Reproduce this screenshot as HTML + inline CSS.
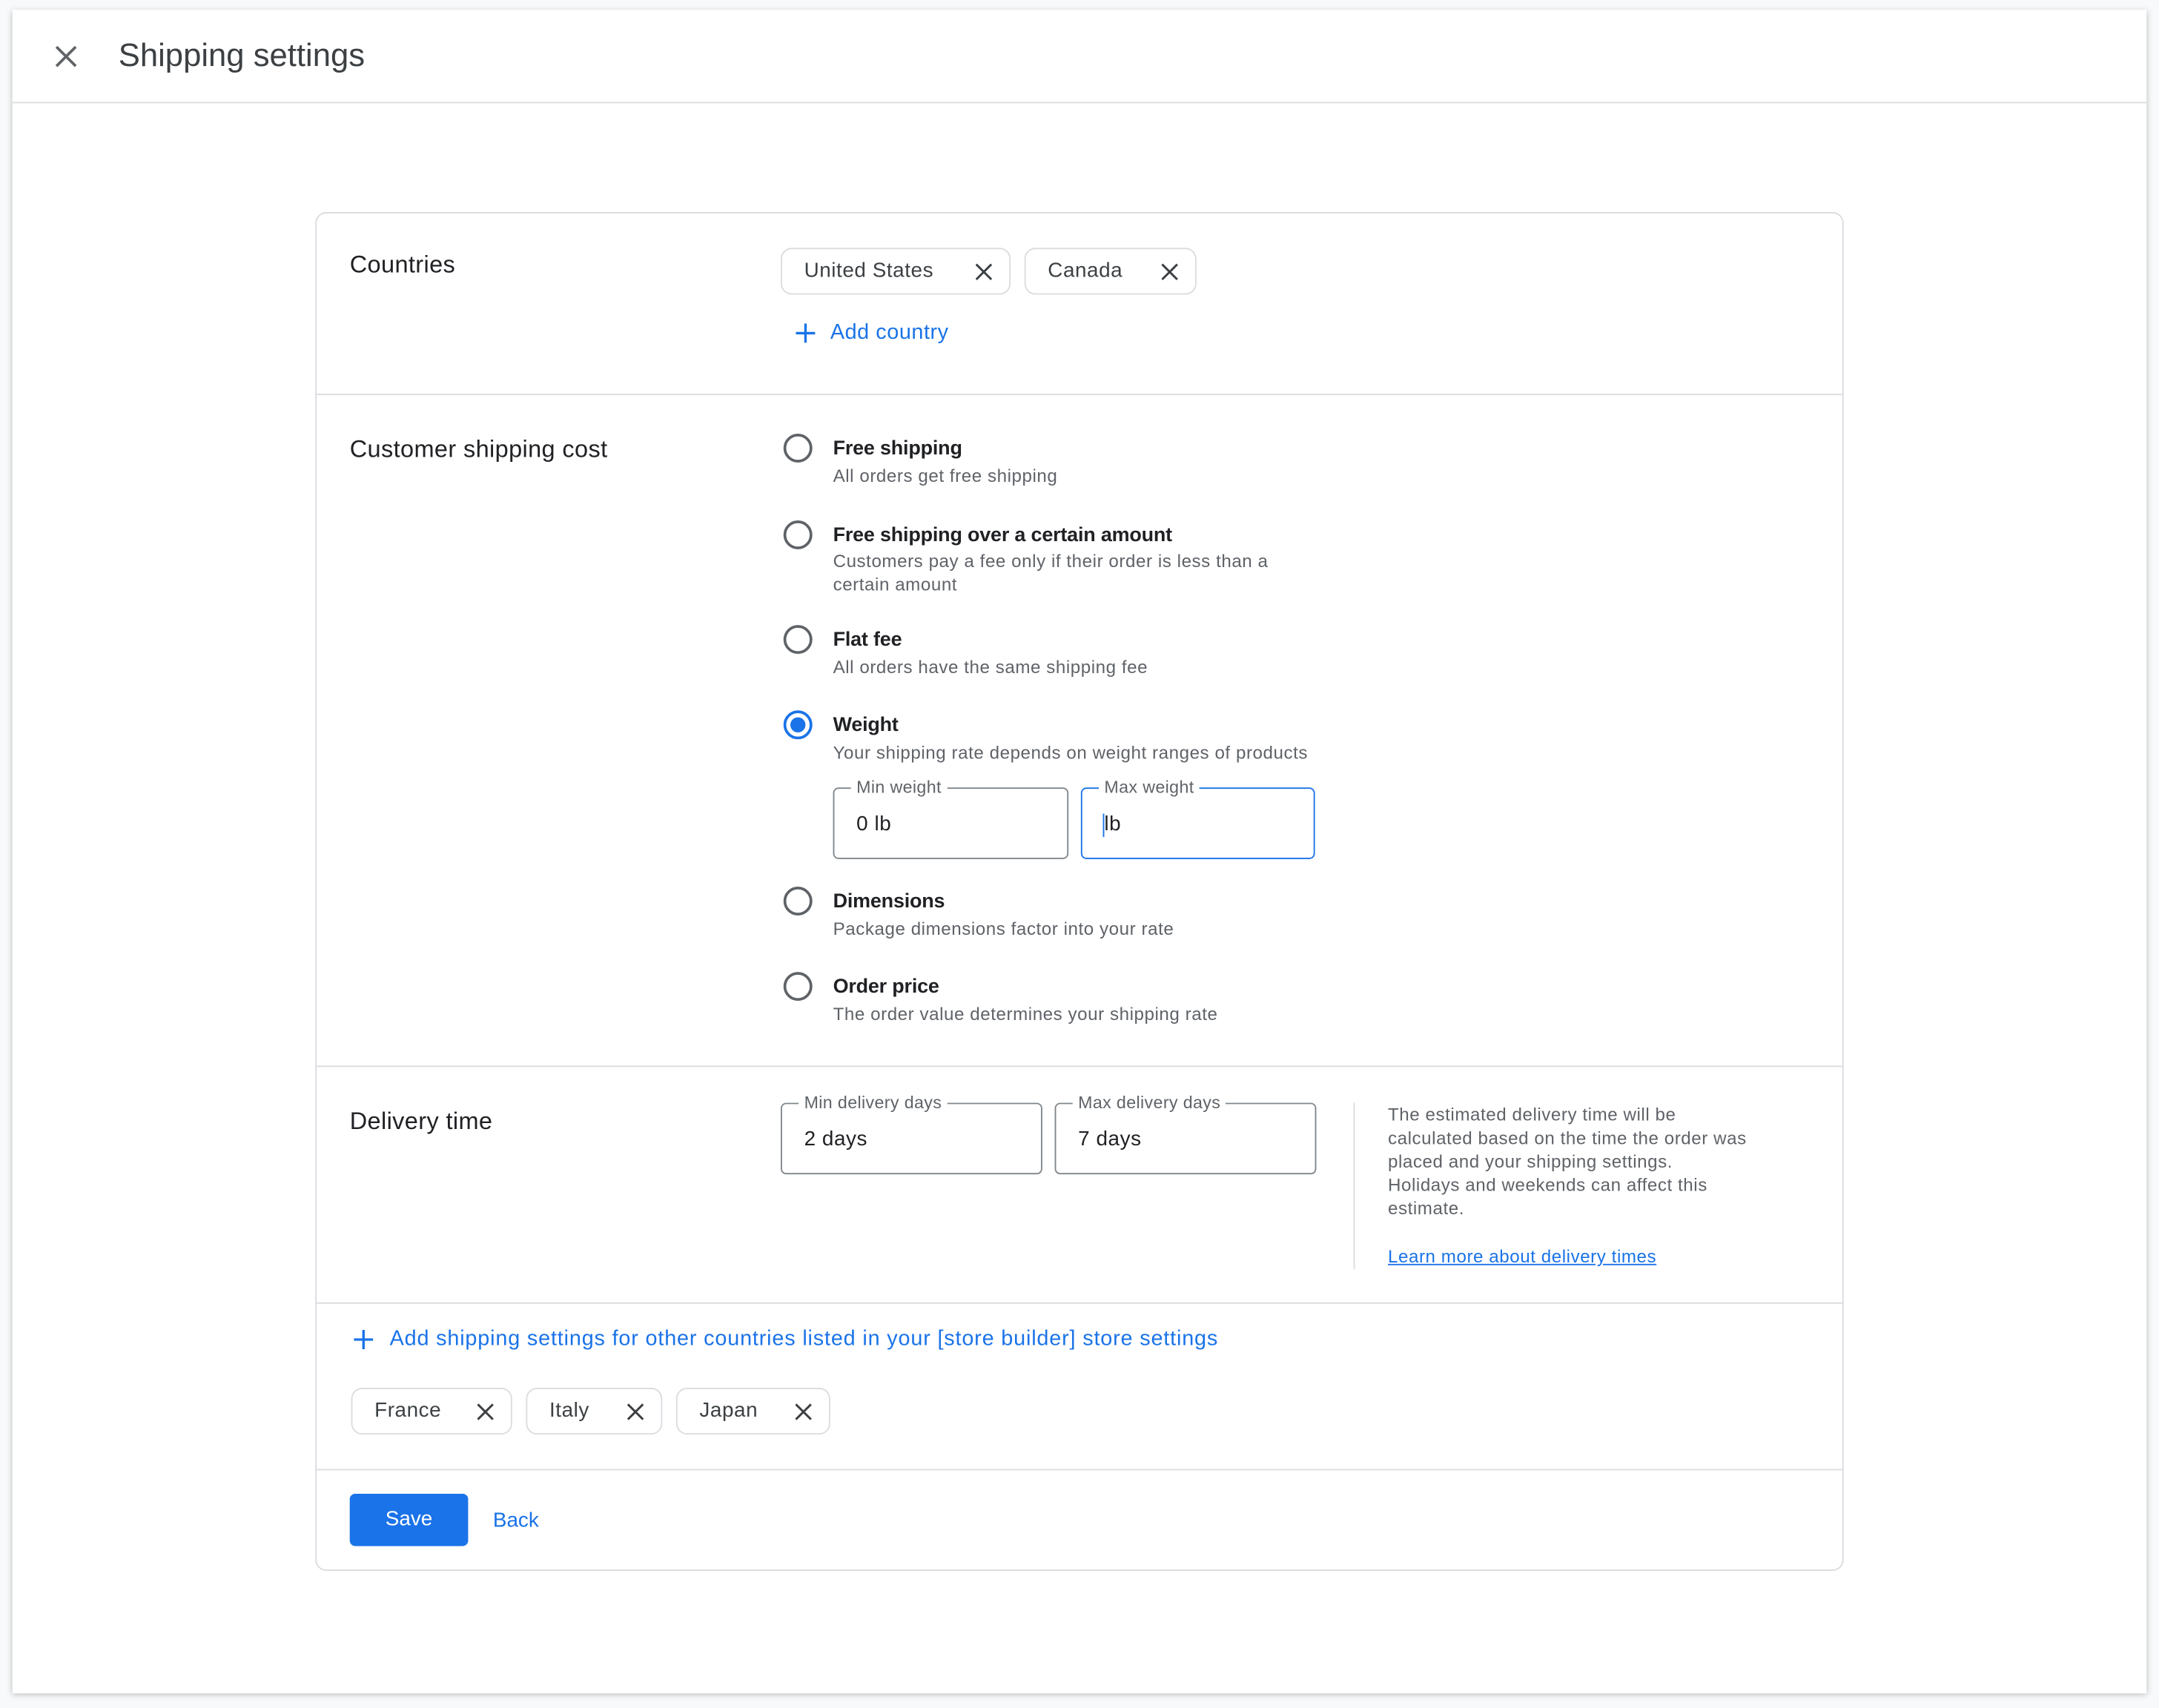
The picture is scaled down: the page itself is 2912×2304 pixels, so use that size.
<!DOCTYPE html>
<html><head><style>
*{box-sizing:border-box;margin:0;padding:0}
html,body{width:2912px;height:2304px;overflow:hidden;background:#f8f9fa}
#w{width:1568px;height:1241px;transform:scale(1.857143);transform-origin:0 0;position:relative;font-family:"Liberation Sans",Arial,sans-serif;color:#202124}
.panel{position:absolute;left:9px;top:7px;width:1550px;height:1223px;background:#fff;box-shadow:0 1px 4px rgba(0,0,0,.25)}
.a{position:absolute}
.hd{position:absolute;left:0;top:67px;width:1550px;height:1px;background:#dadce0}
.card{position:absolute;left:229px;top:154px;width:1110px;height:987px;border:1px solid #dadce0;border-radius:8px}
.div{position:absolute;left:0;width:1108px;height:1px;background:#dadce0}
.lbl{position:absolute;left:24px;font-size:17.5px;color:#202124;letter-spacing:.2px}
.chip{position:absolute;height:34px;border:1px solid #dadce0;border-radius:8px;font-size:15px;color:#3c4043;padding-left:16px;line-height:32px;letter-spacing:.3px}
.chip svg{position:absolute;right:12px;top:10px}
.radio{position:absolute;width:21px;height:21px;border:2px solid #5f6368;border-radius:50%}
.rt{position:absolute;font-size:14.5px;font-weight:bold;color:#202124;letter-spacing:-.1px}
.rd{position:absolute;font-size:13px;color:#5f6368;line-height:17px;letter-spacing:.3px}
.inp{position:absolute;height:52px;border:1px solid #80868b;border-radius:4px;font-size:15px;color:#202124;padding:17px 0 0 16px;letter-spacing:.3px}
.inp span{position:absolute;top:-8px;left:12px;background:#fff;padding:0 4px;font-size:12.5px;color:#5f6368;line-height:14px;letter-spacing:.2px}
.blue{color:#1a73e8}
</style></head><body><div id="w">
<div class="panel">
<svg class="a" style="left:31px;top:26px" width="16" height="16" viewBox="0 0 16 16"><path d="M1 1L15 15M15 1L1 15" stroke="#5f6368" stroke-width="2"/></svg>
<div class="a" style="left:77px;top:20px;font-size:23.5px;color:#3c4043">Shipping settings</div>
<div class="hd"></div>
</div>
<div class="card">
<div class="lbl" style="top:27px">Countries</div>
<div class="chip" style="left:337px;top:25px;width:167px">United States<svg width="13" height="13" viewBox="0 0 13 13"><path d="M1 1L12 12M12 1L1 12" stroke="#3c4043" stroke-width="1.6"/></svg></div>
<div class="chip" style="left:514px;top:25px;width:125px">Canada<svg width="13" height="13" viewBox="0 0 13 13"><path d="M1 1L12 12M12 1L1 12" stroke="#3c4043" stroke-width="1.6"/></svg></div>
<svg class="a" style="left:348px;top:80px" width="14" height="14" viewBox="0 0 14 14"><path d="M7 0V14M0 7H14" stroke="#1a73e8" stroke-width="1.8"/></svg>
<div class="a blue" style="left:373px;top:78px;font-size:15.5px;letter-spacing:.3px">Add country</div>
<div class="div" style="top:131px"></div>
<div class="lbl" style="top:161px">Customer shipping cost</div>
<div class="radio" style="left:339px;top:160px"></div>
<div class="rt" style="left:375px;top:163px">Free shipping</div>
<div class="rd" style="left:375px;top:182px">All orders get free shipping</div>
<div class="radio" style="left:339px;top:223px"></div>
<div class="rt" style="left:375px;top:226px">Free shipping over a certain amount</div>
<div class="rd" style="left:375px;top:244px">Customers pay a fee only if their order is less than a<br>certain amount</div>
<div class="radio" style="left:339px;top:299px"></div>
<div class="rt" style="left:375px;top:302px">Flat fee</div>
<div class="rd" style="left:375px;top:321px">All orders have the same shipping fee</div>
<div class="radio" style="left:339px;top:361px;border-color:#1a73e8"><div style="position:absolute;left:3px;top:3px;width:11px;height:11px;border-radius:50%;background:#1a73e8"></div></div>
<div class="rt" style="left:375px;top:364px">Weight</div>
<div class="rd" style="left:375px;top:383px">Your shipping rate depends on weight ranges of products</div>
<div class="inp" style="left:375px;top:417px;width:171px"><span>Min weight</span>0 lb</div>
<div class="inp" style="left:555px;top:417px;width:170px;border-color:#1a73e8"><span>Max weight</span><b style="position:absolute;left:15px;top:18px;width:1px;height:17px;background:#1a73e8"></b>lb</div>
<div class="radio" style="left:339px;top:489px"></div>
<div class="rt" style="left:375px;top:492px">Dimensions</div>
<div class="rd" style="left:375px;top:511px">Package dimensions factor into your rate</div>
<div class="radio" style="left:339px;top:551px"></div>
<div class="rt" style="left:375px;top:554px">Order price</div>
<div class="rd" style="left:375px;top:573px">The order value determines your shipping rate</div>
<div class="div" style="top:619px"></div>
<div class="lbl" style="top:649px">Delivery time</div>
<div class="inp" style="left:337px;top:646px;width:190px"><span>Min delivery days</span>2 days</div>
<div class="inp" style="left:536px;top:646px;width:190px"><span>Max delivery days</span>7 days</div>
<div class="a" style="left:753px;top:646px;width:1px;height:121px;background:#dadce0"></div>
<div class="rd" style="left:778px;top:646px;width:262px">The estimated delivery time will be calculated based on the time the order was placed and your shipping settings. Holidays and weekends can affect this estimate.</div>
<div class="rd blue" style="left:778px;top:749px;text-decoration:underline">Learn more about delivery times</div>
<div class="div" style="top:791px"></div>
<svg class="a" style="left:27px;top:811px" width="14" height="14" viewBox="0 0 14 14"><path d="M7 0V14M0 7H14" stroke="#1a73e8" stroke-width="1.8"/></svg>
<div class="a blue" style="left:53px;top:809px;font-size:15.5px;letter-spacing:.45px">Add shipping settings for other countries listed in your [store builder] store settings</div>
<div class="chip" style="left:25px;top:853px;width:117px">France<svg width="13" height="13" viewBox="0 0 13 13"><path d="M1 1L12 12M12 1L1 12" stroke="#3c4043" stroke-width="1.6"/></svg></div>
<div class="chip" style="left:152px;top:853px;width:99px">Italy<svg width="13" height="13" viewBox="0 0 13 13"><path d="M1 1L12 12M12 1L1 12" stroke="#3c4043" stroke-width="1.6"/></svg></div>
<div class="chip" style="left:261px;top:853px;width:112px">Japan<svg width="13" height="13" viewBox="0 0 13 13"><path d="M1 1L12 12M12 1L1 12" stroke="#3c4043" stroke-width="1.6"/></svg></div>
<div class="div" style="top:912px"></div>
<div class="a" style="left:24px;top:930px;width:86px;height:38px;background:#1a73e8;border-radius:4px;color:#fff;font-size:15px;text-align:center;line-height:38px">Save</div>
<div class="a blue" style="left:128px;top:941px;font-size:15px">Back</div>
</div>
</div></body></html>
